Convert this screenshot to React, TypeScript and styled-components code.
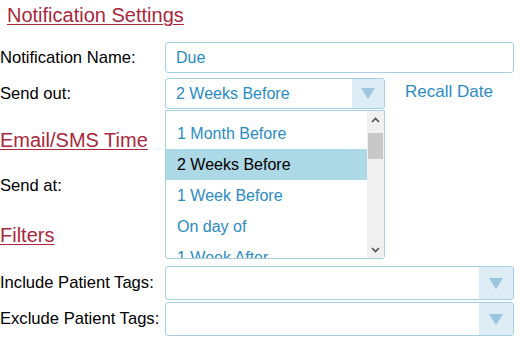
import styled, { createGlobalStyle } from 'styled-components'

const GlobalStyle = createGlobalStyle`
  html, body {
    margin: 0;
    padding: 0;
    background: #ffffff;
    font-family: 'Liberation Sans', Arial, sans-serif;
  }
`

const blue = '#2a8bc4'
const border = '#a6cfe3'

const Page = styled.div`
  width: 520px;
  height: 340px;
  overflow: hidden;
  display: flex;
  flex-direction: column;
`

const SectionTitle = styled.h3<{ $indent?: number; $top: number; $bottom: number }>`
  margin: ${(p) => p.$top}px 0 ${(p) => p.$bottom}px ${(p) => p.$indent ?? 0}px;
  font-size: 20px;
  line-height: 23px;
  font-weight: normal;
  color: #a9283b;
  text-decoration: underline;
  text-underline-offset: 2px;
  text-decoration-thickness: 1px;
`

const Row = styled.div<{ $height: number; $gap?: number }>`
  display: grid;
  grid-template-columns: 165px 1fr;
  align-items: center;
  height: ${(p) => p.$height}px;
  margin-bottom: ${(p) => p.$gap ?? 0}px;
  width: 514px;
`

const Label = styled.label`
  font-size: 16.6px;
  color: #000;
  white-space: nowrap;
`

const TextBox = styled.div`
  box-sizing: border-box;
  height: 100%;
  border: 1px solid ${border};
  border-radius: 3px;
  padding-left: 10px;
  display: flex;
  align-items: center;
  font-size: 16px;
  color: ${blue};
`

const SelectWrap = styled.div`
  display: flex;
  align-items: center;
  height: 100%;
`

const Select = styled.div<{ $width?: number }>`
  position: relative;
  box-sizing: border-box;
  height: 100%;
  width: ${(p) => (p.$width ? `${p.$width}px` : '100%')};
  border: 1px solid ${border};
  border-radius: 3px;
  display: flex;
  font-size: 16px;
  color: ${blue};
`

const SelectValue = styled.div`
  flex: 1;
  display: flex;
  align-items: center;
  padding-left: 10px;
`

const ArrowBox = styled.div<{ $width: number }>`
  width: ${(p) => p.$width}px;
  background: #deedf5;
  display: flex;
  align-items: center;
  justify-content: center;
  border-radius: 0 2px 2px 0;
`

const Triangle = styled.div`
  width: 0;
  height: 0;
  border-left: 7px solid transparent;
  border-right: 7px solid transparent;
  border-top: 11px solid #9cc6de;
`

const LinkText = styled.span`
  margin-left: 20px;
  margin-top: -3px;
  font-size: 17px;
  color: ${blue};
`

const DropList = styled.div`
  position: absolute;
  top: calc(100% + 2px);
  left: -1px;
  width: 220px;
  height: 149px;
  box-sizing: border-box;
  border: 1px solid ${border};
  border-radius: 0 0 3px 3px;
  background: #fff;
  display: flex;
  z-index: 5;
`

const Options = styled.div`
  flex: 1;
  overflow: hidden;
  padding-top: 7px;
`

const Option = styled.div<{ $active?: boolean }>`
  height: 31px;
  display: flex;
  align-items: center;
  padding-left: 11px;
  font-size: 16px;
  color: ${(p) => (p.$active ? '#000' : blue)};
  background: ${(p) => (p.$active ? '#add8e6' : 'transparent')};
`

const Scrollbar = styled.div`
  width: 17px;
  background: #f0f0f0;
  display: flex;
  flex-direction: column;
  align-items: center;
`

const ScrollArrow = styled.div`
  height: 17px;
  display: flex;
  align-items: center;
  justify-content: center;
`

const Track = styled.div`
  flex: 1;
  width: 100%;
  padding-top: 5px;
`

const Thumb = styled.div`
  margin: 0 1px;
  height: 26px;
  background: #c8c8c8;
`

const Chevron = ({ up }: { up?: boolean }) => (
  <svg width="9" height="6" viewBox="0 0 9 6">
    <path
      d={up ? 'M1 5 L4.5 1.5 L8 5' : 'M1 1 L4.5 4.5 L8 1'}
      fill="none"
      stroke="#505050"
      strokeWidth="1.6"
    />
  </svg>
)

const options = ['1 Month Before', '2 Weeks Before', '1 Week Before', 'On day of', '1 Week After']

function App() {
  return (
    <Page>
      <GlobalStyle />
      <SectionTitle $indent={7} $top={4} $bottom={15}>
        Notification Settings
      </SectionTitle>
      <Row $height={31} $gap={5}>
        <Label>Notification Name:</Label>
        <TextBox>Due</TextBox>
      </Row>
      <Row $height={31}>
        <Label>Send out:</Label>
        <SelectWrap>
          <Select $width={220}>
            <SelectValue>2 Weeks Before</SelectValue>
            <ArrowBox $width={32}>
              <Triangle />
            </ArrowBox>
            <DropList>
              <Options>
                {options.map((o) => (
                  <Option key={o} $active={o === '2 Weeks Before'}>
                    {o}
                  </Option>
                ))}
              </Options>
              <Scrollbar>
                <ScrollArrow>
                  <Chevron up />
                </ScrollArrow>
                <Track>
                  <Thumb />
                </Track>
                <ScrollArrow>
                  <Chevron />
                </ScrollArrow>
              </Scrollbar>
            </DropList>
          </Select>
          <LinkText>Recall Date</LinkText>
        </SelectWrap>
      </Row>
      <SectionTitle $top={20} $bottom={18}>
        Email/SMS Time
      </SectionTitle>
      <Row $height={31}>
        <Label>Send at:</Label>
        <div />
      </Row>
      <SectionTitle $top={23} $bottom={19}>
        Filters
      </SectionTitle>
      <Row $height={34} $gap={2}>
        <Label>Include Patient Tags:</Label>
        <Select>
          <SelectValue />
          <ArrowBox $width={34}>
            <Triangle />
          </ArrowBox>
        </Select>
      </Row>
      <Row $height={34}>
        <Label>Exclude Patient Tags:</Label>
        <Select>
          <SelectValue />
          <ArrowBox $width={34}>
            <Triangle />
          </ArrowBox>
        </Select>
      </Row>
    </Page>
  )
}

export default App
